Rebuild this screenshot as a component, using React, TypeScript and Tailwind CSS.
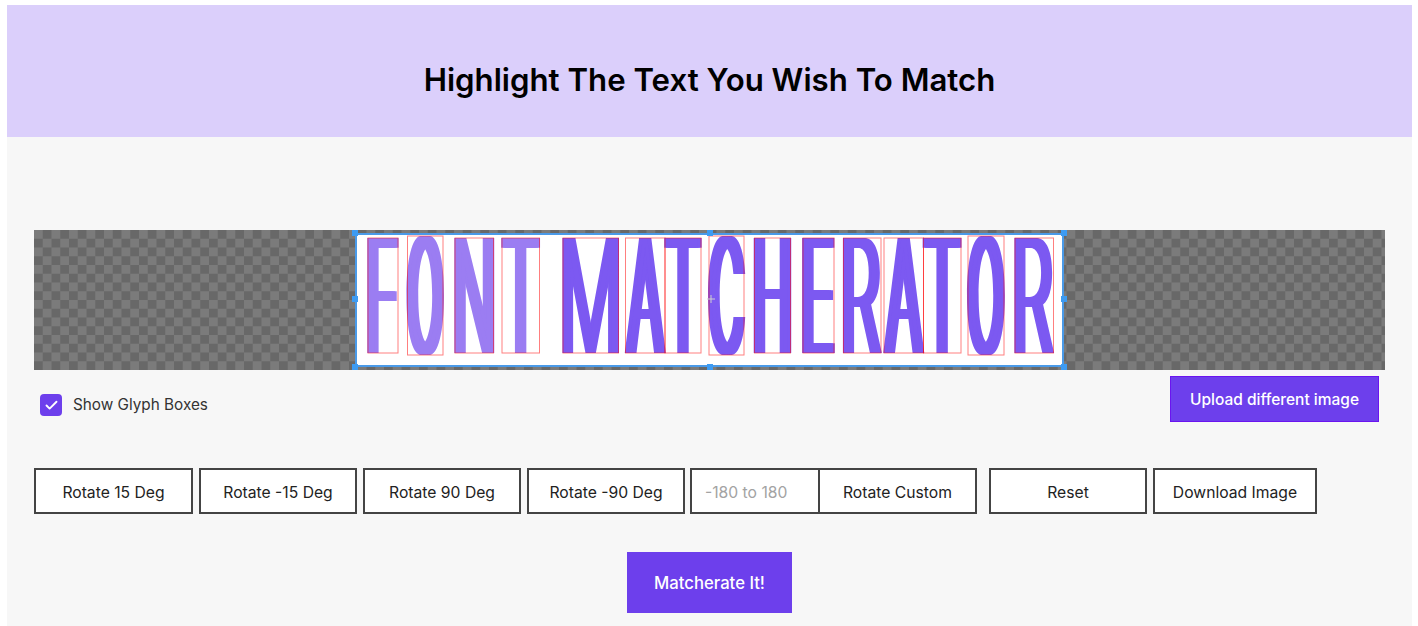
import { Check } from "lucide-react";

// glyph boxes on the image, in page pixels [letter, left, top, right, bottom]
const glyphs: [string, number, number, number, number][] = [
  ["F", 368, 238, 398, 353],
  ["O", 407.5, 236, 443, 355],
  ["N", 455, 238, 493.5, 353],
  ["T", 502, 238, 539.5, 353],
  ["M", 563, 238, 618.5, 353],
  ["A", 625.5, 238, 665, 353],
  ["T", 665, 238, 701, 353],
  ["C", 709, 236, 744, 355],
  ["H", 754.5, 238, 790.5, 353],
  ["E", 803, 238, 834, 353],
  ["R", 843.5, 238, 881, 353],
  ["A", 884, 238, 923.5, 353],
  ["T", 923.5, 238, 961, 353],
  ["O", 968, 236, 1004, 355],
  ["R", 1015, 238, 1053.5, 353],
];

const IMAGE_LEFT = 355;
const IMAGE_TOP = 233;
const BASE_STEM = 11; // stem of Inter light at 160px
const STEM = 9.5; // stem the picture shows

const measure = document.createElement("canvas").getContext("2d")!;
measure.font = "300 160px Inter";

// squeeze a letter into its box, smearing it sideways so the stems stay heavy
const fit = (letter: string, left: number, top: number, right: number, bottom: number, color: string) => {
  const m = measure.measureText(letter);
  const ink = m.actualBoundingBoxLeft + m.actualBoundingBoxRight;
  const w = right - left;
  const spread = Math.max(0, (STEM * ink - w * BASE_STEM) / (w - STEM) / 2);
  const sx = w / (ink + spread * 2);
  const sy = (bottom - top) / (m.actualBoundingBoxAscent + m.actualBoundingBoxDescent);
  const tx = left - IMAGE_LEFT + (m.actualBoundingBoxLeft + spread) * sx;
  const ty = top - IMAGE_TOP + m.actualBoundingBoxAscent * sy;
  return {
    transform: `translate(${tx} ${ty}) scale(${sx} ${sy})`,
    textShadow: [1, -1, 0.5, -0.5].map((k) => `${k * spread}px 0 ${color}`).join(","),
  };
};

const Handle = ({ className }: { className: string }) => (
  <span className={`absolute h-[6px] w-[6px] bg-[#3d9bf2] ${className}`} />
);

const OutlineButton = ({ label, className }: { label: string; className: string }) => (
  <button className={`h-[46px] border-2 border-[#444444] bg-white pt-[3px] text-[15.7px] text-[#222222] ${className}`}>
    {label}
  </button>
);

export default function App() {
  return (
    <div className="flex min-h-screen flex-col bg-white pt-[5px] pr-[6px] pl-[7px] font-['Inter',sans-serif]">
      <header className="flex h-[132px] items-center justify-center bg-[#dbcffb] pt-[18px]">
        <h1 className="text-[31.2px] font-semibold text-black">Highlight The Text You Wish To Match</h1>
      </header>

      <main className="flex-1 bg-[#f7f7f7] px-[27px] pt-[93px]">
        <div className="flex h-[140px] items-center justify-center bg-[conic-gradient(#686868_25%,#7b7b7b_0_50%,#686868_0_75%,#7b7b7b_0)] bg-size-[17.5px_17.5px]">
          <div className="relative h-[134px] w-[709px] border-2 border-[#4a9ae8] bg-white">
            <svg className="absolute top-[-2px] left-[-2px] overflow-visible" width="709" height="134">
              {glyphs.map(([letter, left, top, right, bottom], i) => {
                const color = i < 4 ? "#9b7df2" : "#7c59f1";
                const { transform, textShadow } = fit(letter, left, top, right, bottom, color);
                return (
                  <g key={i}>
                    <text
                      transform={transform}
                      fill={color}
                      style={{ textShadow }}
                      className="font-['Inter'] text-[160px] font-light"
                    >
                      {letter}
                    </text>
                    <rect
                      x={left - IMAGE_LEFT}
                      y={top - IMAGE_TOP}
                      width={right - left}
                      height={bottom - top}
                      fill="none"
                      stroke="#ff0000"
                      strokeOpacity="0.5"
                    />
                  </g>
                );
              })}
              <path d="M356 62v8M352 66h8" stroke="#cfcfcf" strokeWidth="1" />
            </svg>
            <Handle className="top-[-5px] left-[-5px]" />
            <Handle className="top-[-5px] left-[350px]" />
            <Handle className="top-[-5px] right-[-5px]" />
            <Handle className="top-[61px] left-[-5px]" />
            <Handle className="top-[61px] right-[-5px]" />
            <Handle className="bottom-[-5px] left-[-5px]" />
            <Handle className="bottom-[-5px] left-[350px]" />
            <Handle className="right-[-5px] bottom-[-5px]" />
          </div>
        </div>

        <div className="mt-[6px] flex items-start justify-between px-[6px]">
          <label className="mt-[18px] flex items-center gap-[11px] text-[15.3px] text-[#333333]">
            <span className="flex h-[22px] w-[22px] items-center justify-center rounded-[4px] bg-[#6d3fec]">
              <Check className="h-[15px] w-[15px] text-white" strokeWidth={3} />
            </span>
            Show Glyph Boxes
          </label>
          <button className="h-[46px] w-[209px] border border-[#6a14f0] bg-[#6d3fec] pt-[1px] text-[15.5px] font-medium text-white">
            Upload different image
          </button>
        </div>

        <div className="mt-[46px] flex">
          <OutlineButton label="Rotate 15 Deg" className="w-[159px]" />
          <OutlineButton label="Rotate -15 Deg" className="ml-[6px] w-[158px]" />
          <OutlineButton label="Rotate 90 Deg" className="ml-[6px] w-[158px]" />
          <OutlineButton label="Rotate -90 Deg" className="ml-[6px] w-[158px]" />
          <input
            placeholder="-180 to 180"
            className="ml-[5px] h-[46px] w-[130px] border-2 border-[#444444] bg-white pt-[3px] pl-[13px] text-[15.7px] placeholder:text-[#a3a3a3]"
          />
          <OutlineButton label="Rotate Custom" className="ml-[-2px] w-[159px]" />
          <OutlineButton label="Reset" className="ml-[12px] w-[158px]" />
          <OutlineButton label="Download Image" className="ml-[6px] w-[164px]" />
        </div>

        <div className="mt-[38px] flex justify-center">
          <button className="h-[61px] w-[165px] bg-[#6d3fec] pt-[2px] text-[16.7px] font-medium text-white">Matcherate It!</button>
        </div>
      </main>
    </div>
  );
}
